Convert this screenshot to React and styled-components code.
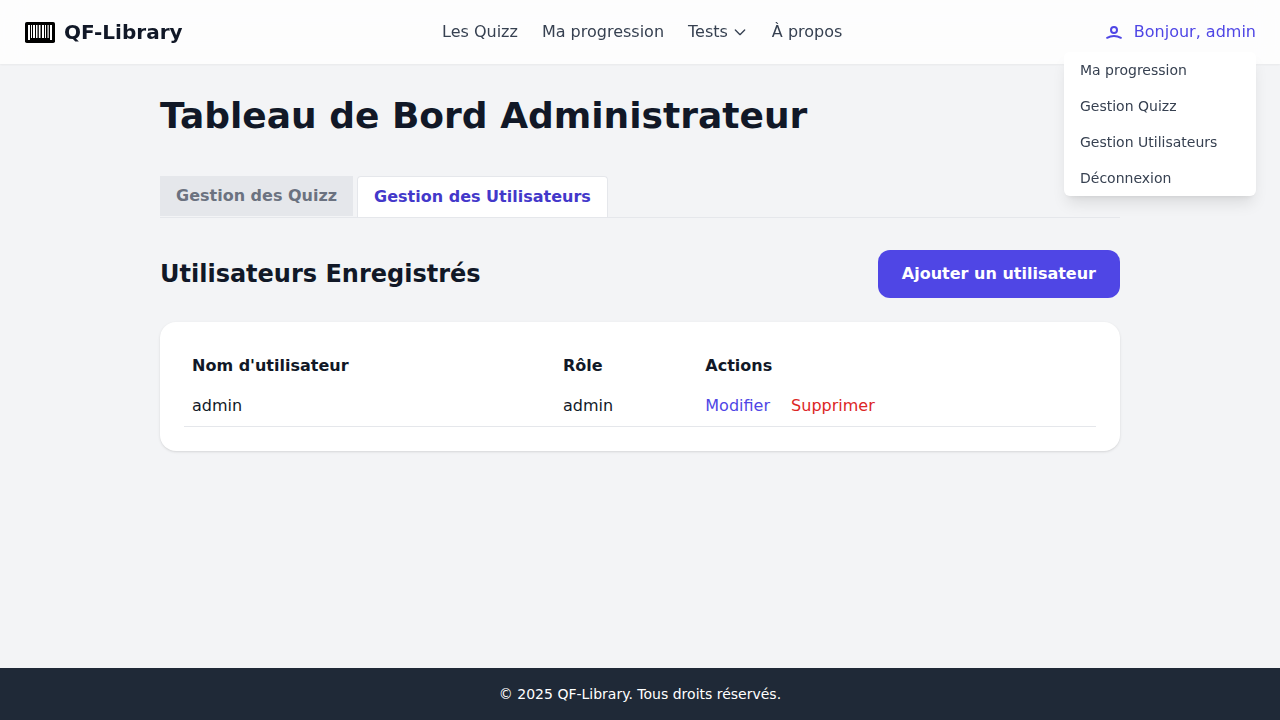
import React from 'react';
import styled, { createGlobalStyle, css } from 'styled-components';

const GlobalStyle = createGlobalStyle`
  *, *::before, *::after { box-sizing: border-box; }
  body {
    margin: 0;
    background: #f3f4f6;
    color: #111827;
    font-family: 'DejaVu Sans', sans-serif;
    font-size: 16px;
    line-height: 24px;
  }
  h1, h2, p, ul { margin: 0; padding: 0; }
  ul { list-style: none; }
  a { color: inherit; text-decoration: none; }
  button { font: inherit; border: 0; cursor: pointer; }
  svg { display: block; }
`;

const Page = styled.div`
  display: flex;
  flex-direction: column;
  min-height: 100vh;
`;

const Header = styled.header`
  position: sticky;
  top: 0;
  z-index: 10;
  display: flex;
  align-items: center;
  justify-content: space-between;
  height: 64px;
  padding: 0 24px;
  background: rgba(255, 255, 255, 0.8);
  backdrop-filter: blur(12px);
  box-shadow: 0 1px 2px rgba(0, 0, 0, 0.05);
`;

const Brand = styled.a`
  display: flex;
  align-items: center;
  gap: 8px;
  font-size: 20px;
  line-height: 28px;
  font-weight: 700;
`;

const Nav = styled.nav`
  display: flex;
  align-items: center;
  gap: 24px;
  color: #374151;
`;

const NavLink = styled.a`
  display: flex;
  align-items: center;
  gap: 4px;
`;

const Account = styled.div`
  position: relative;
  color: #4f46e5;
`;

const AccountLink = styled.a`
  display: flex;
  align-items: center;
  gap: 8px;
`;

const Menu = styled.div`
  position: absolute;
  top: calc(100% + 8px);
  right: 0;
  width: 192px;
  border-radius: 6px;
  background: #fff;
  box-shadow: 0 10px 15px -3px rgba(0, 0, 0, 0.1), 0 4px 6px -4px rgba(0, 0, 0, 0.1);
`;

const MenuItem = styled.a`
  display: block;
  padding: 8px 16px;
  font-size: 14px;
  line-height: 20px;
  color: #374151;
`;

const Main = styled.main`
  flex: 1;
  width: 960px;
  margin: 0 auto;
  padding-top: 32px;
`;

const Title = styled.h1`
  margin-bottom: 40px;
  font-size: 36px;
  line-height: 40px;
  font-weight: 800;
`;

const Tabs = styled.ul`
  display: flex;
  align-items: flex-start;
  gap: 4px;
  margin-bottom: 32px;
  border-bottom: 1px solid #e5e7eb;
`;

const Tab = styled.li`
  padding: 8px 16px;
  font-weight: 600;
  color: #6b7280;
  background: #e5e7eb;
  margin-bottom: 1px;
  ${({ $active }) => $active && css`
    margin-bottom: 0;
    color: #4338ca;
    background: #fff;
    border: 1px solid #e5e7eb;
    border-bottom: 0;
    border-radius: 4px 4px 0 0;
  `}
`;

const SectionHead = styled.div`
  display: flex;
  align-items: center;
  justify-content: space-between;
  margin-bottom: 24px;
`;

const SectionTitle = styled.h2`
  font-size: 24px;
  line-height: 32px;
  font-weight: 700;
`;

const AddButton = styled.button`
  padding: 12px 24px;
  border-radius: 12px;
  background: #4f46e5;
  color: #fff;
  font-weight: 600;
`;

const Card = styled.section`
  padding: 24px;
  border-radius: 16px;
  background: #fff;
  box-shadow: 0 1px 3px rgba(0, 0, 0, 0.1), 0 1px 2px -1px rgba(0, 0, 0, 0.1);
`;

const Table = styled.table`
  width: 100%;
  table-layout: fixed;
  border-collapse: separate;
  border-spacing: 0;
  text-align: left;
`;

const Th = styled.th`
  width: ${({ $width }) => $width || 'auto'};
  padding: 8px;
  font-weight: 700;
`;

const Td = styled.td`
  padding: 8px;
  border-bottom: 1px solid #e5e7eb;
`;

const Action = styled.a`
  margin-right: 16px;
  color: ${({ $danger }) => ($danger ? '#dc2626' : '#4f46e5')};
`;

const Footer = styled.footer`
  padding: 16px;
  background: #1f2937;
  color: #fff;
  text-align: center;
  font-size: 14px;
  line-height: 20px;
`;

const BarcodeIcon = () => (
  <svg width="32" height="32" viewBox="0 0 32 32">
    <rect x="1" y="6" width="30" height="21" rx="1.8" fill="#000" />
    <g fill="#fff">
      <rect x="4" y="9" width="2" height="15" />
      <rect x="7" y="9" width="1" height="13" />
      <rect x="9" y="9" width="2" height="13" />
      <rect x="12" y="9" width="1.5" height="13" />
      <rect x="14.8" y="9" width="1.7" height="13" />
      <rect x="18" y="9" width="2" height="13" />
      <rect x="21" y="9" width="1" height="13" />
      <rect x="23.5" y="9" width="1.2" height="13" />
      <rect x="26" y="9" width="2" height="15" />
    </g>
  </svg>
);

const ChevronIcon = () => (
  <svg width="16" height="16" viewBox="0 0 24 24" fill="none" stroke="currentColor" strokeWidth="2" strokeLinecap="round" strokeLinejoin="round">
    <path d="M19 9l-7 7-7-7" />
  </svg>
);

const UserIcon = () => (
  <svg width="24" height="24" viewBox="0 0 24 24" fill="none" stroke="currentColor" strokeWidth="2" strokeLinecap="round" strokeLinejoin="round">
    <path d="M5.121 17.804A13.937 13.937 0 0112 16c2.5 0 4.847.655 6.879 1.804M15 10a3 3 0 11-6 0 3 3 0 016 0z" />
  </svg>
);

const menuItems = ['Ma progression', 'Gestion Quizz', 'Gestion Utilisateurs', 'Déconnexion'];
const users = [{ name: 'admin', role: 'admin' }];

export default function App() {
  return (
    <>
      <GlobalStyle />
      <Page>
        <Header>
          <Brand href="#"><BarcodeIcon />QF-Library</Brand>
          <Nav>
            <NavLink href="#">Les Quizz</NavLink>
            <NavLink href="#">Ma progression</NavLink>
            <NavLink href="#">Tests<ChevronIcon /></NavLink>
            <NavLink href="#">À propos</NavLink>
          </Nav>
          <Account>
            <AccountLink href="#"><UserIcon />Bonjour, admin</AccountLink>
            <Menu>
              {menuItems.map((item) => <MenuItem href="#" key={item}>{item}</MenuItem>)}
            </Menu>
          </Account>
        </Header>
        <Main>
          <Title>Tableau de Bord Administrateur</Title>
          <Tabs>
            <Tab>Gestion des Quizz</Tab>
            <Tab $active>Gestion des Utilisateurs</Tab>
          </Tabs>
          <SectionHead>
            <SectionTitle>Utilisateurs Enregistrés</SectionTitle>
            <AddButton>Ajouter un utilisateur</AddButton>
          </SectionHead>
          <Card>
            <Table>
              <thead>
                <tr>
                  <Th $width="371px">Nom d'utilisateur</Th>
                  <Th $width="142.3px">Rôle</Th>
                  <Th>Actions</Th>
                </tr>
              </thead>
              <tbody>
                {users.map((user) => (
                  <tr key={user.name}>
                    <Td>{user.name}</Td>
                    <Td>{user.role}</Td>
                    <Td>
                      <Action href="#">Modifier</Action>{' '}
                      <Action href="#" $danger>Supprimer</Action>
                    </Td>
                  </tr>
                ))}
              </tbody>
            </Table>
          </Card>
        </Main>
        <Footer>© 2025 QF-Library. Tous droits réservés.</Footer>
      </Page>
    </>
  );
}
